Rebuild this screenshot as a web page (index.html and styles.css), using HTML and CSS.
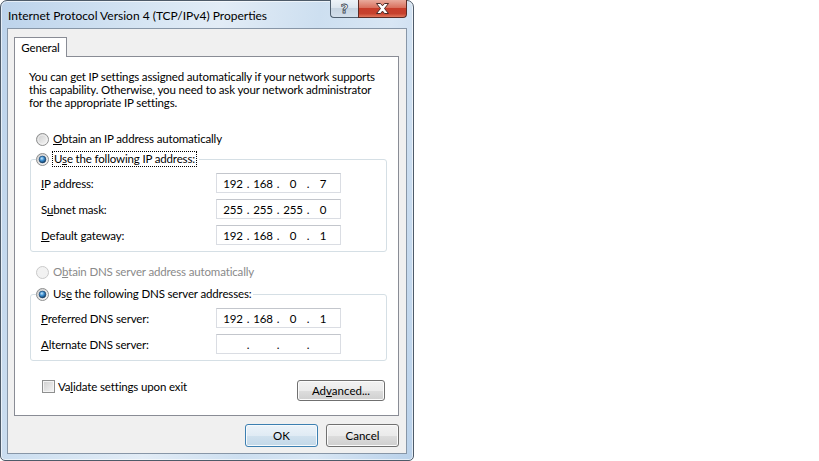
FILE: index.html
```html
<!DOCTYPE html>
<html lang="en">
<head>
  <meta charset="UTF-8">
  <title>Internet Protocol Version 4 (TCP/IPv4) Properties</title>
  <link rel="stylesheet" href="styles.css">
</head>
<body>
  <!-- shared gradients for radio buttons -->
  <svg class="defs" width="0" height="0">
    <defs>
      <linearGradient id="radioFill" x1="0" y1="0" x2="1" y2="1">
        <stop offset="0" stop-color="#c9c9c9"/>
        <stop offset="1" stop-color="#fbfbfb"/>
      </linearGradient>
      <radialGradient id="radioDot" cx="0.4" cy="0.35" r="0.7">
        <stop offset="0" stop-color="#c6e8fb"/>
        <stop offset="0.45" stop-color="#3d8ed0"/>
        <stop offset="1" stop-color="#0c3358"/>
      </radialGradient>
    </defs>
  </svg>

  <div class="window">
    <div class="titlebar">
      <span class="title">Internet Protocol Version 4 (TCP/IPv4) Properties</span>
      <div class="caption-buttons">
        <span class="cap-btn help-btn">?</span>
        <span class="cap-btn close-btn">
          <svg width="15" height="11" viewBox="0 0 15 11">
            <path d="M1.5 0.5h4l2 2.3 2-2.3h4l-4 5 4 5h-4l-2-2.4-2 2.4h-4l4-5z" fill="#fff" stroke="#4a2a26" stroke-width="1"/>
          </svg>
        </span>
      </div>
    </div>

    <div class="client">
      <div class="tabs"><span class="tab">General</span></div>

      <div class="panel">
        <p class="intro">You can get IP settings assigned automatically if your network supports<br>this capability. Otherwise, you need to ask your network administrator<br>for the appropriate IP settings.</p>

        <div class="radio-row first-radio">
          <svg class="radio" width="13" height="13" viewBox="0 0 13 13"><circle cx="6.5" cy="6.5" r="6" fill="url(#radioFill)" stroke="#8e8f8f"/><circle cx="6.5" cy="6.5" r="4.5" fill="none" stroke="#f4f4f4" stroke-opacity=".7"/></svg>
          <span class="radio-label"><u>O</u>btain an IP address automatically</span>
        </div>

        <div class="group">
          <div class="radio-row group-head">
            <svg class="radio" width="13" height="13" viewBox="0 0 13 13"><circle cx="6.5" cy="6.5" r="6" fill="url(#radioFill)" stroke="#8e8f8f"/><circle cx="6.5" cy="6.5" r="3.4" fill="url(#radioDot)" stroke="#163c63" stroke-width=".6"/></svg>
            <span class="radio-label focused">U<u>s</u>e the following IP address:</span>
          </div>
          <div class="field-row">
            <span class="field-label"><u>I</u>P address:</span>
            <div class="ip-box"><span class="oct">192</span><span class="dot">.</span><span class="oct">168</span><span class="dot">.</span><span class="oct">0</span><span class="dot">.</span><span class="oct">7</span></div>
          </div>
          <div class="field-row">
            <span class="field-label">S<u>u</u>bnet mask:</span>
            <div class="ip-box"><span class="oct">255</span><span class="dot">.</span><span class="oct">255</span><span class="dot">.</span><span class="oct">255</span><span class="dot">.</span><span class="oct">0</span></div>
          </div>
          <div class="field-row">
            <span class="field-label"><u>D</u>efault gateway:</span>
            <div class="ip-box"><span class="oct">192</span><span class="dot">.</span><span class="oct">168</span><span class="dot">.</span><span class="oct">0</span><span class="dot">.</span><span class="oct">1</span></div>
          </div>
        </div>

        <div class="radio-row second-radio disabled">
          <svg class="radio" width="13" height="13" viewBox="0 0 13 13"><circle cx="6.5" cy="6.5" r="6" fill="#f2f2f2" stroke="#c9c9c9"/></svg>
          <span class="radio-label">O<u>b</u>tain DNS server address automatically</span>
        </div>

        <div class="group second-group">
          <div class="radio-row group-head">
            <svg class="radio" width="13" height="13" viewBox="0 0 13 13"><circle cx="6.5" cy="6.5" r="6" fill="url(#radioFill)" stroke="#8e8f8f"/><circle cx="6.5" cy="6.5" r="3.4" fill="url(#radioDot)" stroke="#163c63" stroke-width=".6"/></svg>
            <span class="radio-label">Us<u>e</u> the following DNS server addresses:</span>
          </div>
          <div class="field-row">
            <span class="field-label"><u>P</u>referred DNS server:</span>
            <div class="ip-box"><span class="oct">192</span><span class="dot">.</span><span class="oct">168</span><span class="dot">.</span><span class="oct">0</span><span class="dot">.</span><span class="oct">1</span></div>
          </div>
          <div class="field-row">
            <span class="field-label"><u>A</u>lternate DNS server:</span>
            <div class="ip-box"><span class="oct"></span><span class="dot">.</span><span class="oct"></span><span class="dot">.</span><span class="oct"></span><span class="dot">.</span><span class="oct"></span></div>
          </div>
        </div>

        <div class="bottom-row">
          <div class="check-row">
            <span class="checkbox"></span>
            <span>Va<u>l</u>idate settings upon exit</span>
          </div>
          <button class="btn advanced">Ad<u>v</u>anced...</button>
        </div>
      </div>

      <div class="dialog-buttons">
        <button class="btn default">OK</button>
        <button class="btn">Cancel</button>
      </div>
    </div>
  </div>
</body>
</html>
```

FILE: styles.css
```css
body {
  margin: 0;
  background: #fff;
  font-family: Lato, "Liberation Sans", sans-serif;
  font-size: 11.5px;
  letter-spacing: -0.15px;
  color: #000;
}
.defs {
  display: block;
  width: 0;
  height: 0;
  overflow: hidden;
}
u {
  text-underline-offset: 1px;
}

/* window frame */
.window {
  width: 414px;
  height: 461px;
  box-sizing: border-box;
  border: 1px solid #4e5b69;
  border-radius: 7px 7px 5px 5px;
  padding: 0 6px 6px 6px;
  display: flex;
  flex-direction: column;
  background: linear-gradient(100deg, #bcd3eb 0%, #d6e5f3 30%, #e2ecf6 45%, #cddff0 65%, #d8e6f4 80%, #b9d1ea 100%);
  box-shadow: inset 0 0 0 1px rgba(255, 255, 255, 0.6);
}
.titlebar {
  height: 27px;
  display: flex;
  justify-content: space-between;
  align-items: flex-start;
}
.title {
  margin: 7px 0 0 1px;
  line-height: 15px;
  font-size: 12px;
  letter-spacing: 0;
}
.caption-buttons {
  display: flex;
  margin-top: -1px;
}
.cap-btn {
  height: 18px;
  display: flex;
  align-items: center;
  justify-content: center;
  box-sizing: border-box;
  border: 1px solid #4f5e6e;
  border-top: none;
}
.help-btn {
  width: 28px;
  border-right: none;
  border-radius: 0 0 0 4px;
  background: linear-gradient(#eef3f8 0%, #dde6ef 45%, #c7d4e1 50%, #d3dfeb 100%);
  color: #fff;
  font-family: "DejaVu Sans", sans-serif;
  font-weight: bold;
  font-size: 13px;
  -webkit-text-stroke: 0.8px #3d4a57;
}
.close-btn {
  width: 49px;
  border-color: #5c2b25;
  border-radius: 0 0 4px 0;
  background: linear-gradient(#e9aa9c 0%, #d9715e 45%, #c73d2a 50%, #c6412d 80%, #e2775c 100%);
}

/* client area */
.client {
  flex: 1;
  background: #f0f0f0;
  border: 1px solid #8796a7;
  padding: 8px 7px 0 6px;
}
.tabs {
  display: flex;
}
.tab {
  position: relative;
  z-index: 1;
  width: 53px;
  height: 20px;
  box-sizing: border-box;
  border: 1px solid #898c95;
  border-bottom: none;
  margin-bottom: -1px;
  background: #fff;
  text-align: center;
  line-height: 19px;
}
.panel {
  height: 360px;
  box-sizing: border-box;
  border: 1px solid #898c95;
  background: #fff;
  padding: 13px 0 0 14px;
}
.intro {
  margin: 0;
  line-height: 13px;
  white-space: nowrap;
}

/* radio rows */
.radio-row {
  display: flex;
  align-items: center;
  height: 16px;
}
.radio {
  flex: none;
}
.radio-label {
  margin-left: 4px;
  line-height: 14px;
}
.radio-label.focused {
  margin-left: 3px;
  border: 1px dotted #000;
  padding: 0 1px;
}
.first-radio {
  margin: 22px 0 0 7px;
}
.second-radio {
  margin: 12px 0 0 7px;
}
.disabled .radio-label {
  color: #8a8a8a;
}

/* group boxes */
.group {
  width: 357px;
  box-sizing: border-box;
  margin: 12px 0 0 1px;
  border: 1px solid #d5dfe5;
  border-radius: 3px;
  padding: 0 0 6px 10px;
  display: flex;
  flex-direction: column;
  gap: 6px;
}
.second-group {
  margin-top: 14px;
}
.group-head {
  margin: -9px 0 0 -5px;
  align-self: flex-start;
  background: #fff;
  padding-right: 2px;
}
.field-row {
  display: flex;
  align-items: center;
  height: 20px;
}
.field-label {
  width: 175px;
}
.ip-box {
  width: 125px;
  height: 20px;
  box-sizing: border-box;
  border: 1px solid #dadde3;
  border-top-color: #c3c6cc;
  padding-left: 5px;
  display: flex;
  align-items: center;
}
.oct {
  width: 22px;
  text-align: center;
}
.dot {
  width: 8px;
  text-align: center;
}

/* bottom of the panel */
.bottom-row {
  display: flex;
  justify-content: space-between;
  align-items: flex-start;
  margin-top: 19px;
  padding: 0 13px;
}
.check-row {
  display: flex;
  align-items: center;
  line-height: 13px;
}
.checkbox {
  width: 13px;
  height: 13px;
  box-sizing: border-box;
  border: 1px solid #8e8f8f;
  background: linear-gradient(135deg, #cfcfcf, #f5f5f5);
  box-shadow: inset 0 0 0 1px #f4f4f4;
  margin-right: 3px;
}

/* buttons */
.btn {
  font: inherit;
  color: #000;
  width: 73px;
  height: 23px;
  padding: 0;
  border: 1px solid #707070;
  border-radius: 3px;
  background: linear-gradient(#f2f2f2 0%, #ebebeb 50%, #dddddd 51%, #cfcfcf 100%);
  box-shadow: inset 0 0 0 1px #fbfbfb;
}
.btn.advanced {
  width: 88px;
  height: 21px;
}
.btn.default {
  border-color: #3c7fb1;
  background: linear-gradient(#ecf3f9 0%, #e0ebf4 50%, #d0e1ee 51%, #c3d8e8 100%);
  box-shadow: inset 0 0 0 1px #f6fafd;
}
.dialog-buttons {
  display: flex;
  justify-content: flex-end;
  gap: 8px;
  margin-top: 8px;
}
```
